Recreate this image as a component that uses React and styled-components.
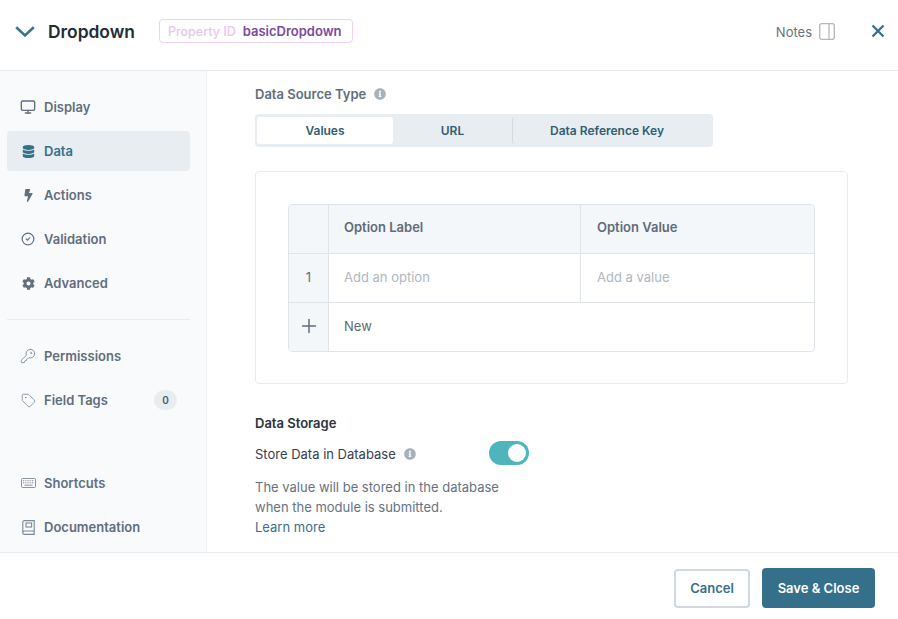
import React from 'react';
import styled, { createGlobalStyle } from 'styled-components';
import { CircleCheck, KeyRound, Monitor, Plus, Tag } from 'lucide-react';
import { FaBolt, FaCog, FaDatabase, FaInfoCircle } from 'react-icons/fa';

const GlobalStyle = createGlobalStyle`
  html, body {
    margin: 0;
    padding: 0;
    height: 100%;
    background: #fff;
    font-family: Inter, "Liberation Sans", sans-serif;
    overflow: hidden;
  }
  * {
    box-sizing: border-box;
  }
`;

const ChevronIcon = () => (
  <svg width="20" height="11" viewBox="0 0 20 11" fill="none" stroke="currentColor" strokeWidth="2.6">
    <path d="M1.2 1.2 L10 9.4 L18.8 1.2" />
  </svg>
);

const CloseGlyph = () => (
  <svg width="14" height="14" viewBox="0 0 14 14" fill="none" stroke="currentColor" strokeWidth="2.3">
    <path d="M1.5 1.5 L12.5 12.5 M12.5 1.5 L1.5 12.5" />
  </svg>
);

const PanelIcon = () => (
  <svg width="16" height="17" viewBox="0 0 16 17" fill="none" stroke="currentColor" strokeWidth="1.3">
    <rect x="0.7" y="0.7" width="14.6" height="15.6" rx="2" />
    <path d="M10 0.7 V16.3" />
  </svg>
);

const KeyboardIcon = () => (
  <svg width="15" height="10" viewBox="0 0 15 10" fill="none" stroke="currentColor" strokeWidth="0.9">
    <rect x="0.5" y="0.5" width="14" height="9" rx="1" />
    <path d="M2 2.7 H13 M2 4.8 H13" strokeDasharray="1 0.8" />
    <path d="M3.5 7.2 H11.5" />
  </svg>
);

const BookIcon = () => (
  <svg width="13" height="15" viewBox="0 0 13 15" fill="none" stroke="currentColor" strokeWidth="1.1">
    <path d="M2.5 0.6 H12.2 V14.4 H2.5 C1.4 14.4 0.8 13.7 0.8 12.7 V2.3 C0.8 1.3 1.4 0.6 2.5 0.6 Z" />
    <path d="M0.8 12.3 C0.8 11.4 1.4 11 2.5 11 H12.2" />
    <rect x="4" y="3" width="5.6" height="4" />
  </svg>
);

const mainItems = [
  { label: 'Display', icon: <Monitor size={16} /> },
  { label: 'Data', icon: <FaDatabase size={13} />, active: true },
  { label: 'Actions', icon: <FaBolt size={13} /> },
  { label: 'Validation', icon: <CircleCheck size={14} /> },
  { label: 'Advanced', icon: <FaCog size={13} /> },
];

const App = () => {
  return (
    <Modal>
      <GlobalStyle />
      <Header>
        <ChevronButton>
          <ChevronIcon />
        </ChevronButton>
        <Title>Dropdown</Title>
        <PropertyBadge>
          <span>Property ID</span>
          <strong>basicDropdown</strong>
        </PropertyBadge>
        <NotesLabel>Notes</NotesLabel>
        <NotesIcon>
          <PanelIcon />
        </NotesIcon>
        <CloseIcon>
          <CloseGlyph />
        </CloseIcon>
      </Header>

      <Body>
        <Sidebar>
          <NavGroup>
            {mainItems.map((item) => (
              <NavItem key={item.label} $active={item.active}>
                <NavIcon>{item.icon}</NavIcon>
                {item.label}
              </NavItem>
            ))}
          </NavGroup>
          <Divider />
          <NavGroup>
            <NavItem>
              <NavIcon $light>
                <KeyRound size={16} strokeWidth={1.3} />
              </NavIcon>
              Permissions
            </NavItem>
            <NavItem>
              <NavIcon $light>
                <Tag size={15} strokeWidth={1.3} />
              </NavIcon>
              Field Tags
              <Count>0</Count>
            </NavItem>
          </NavGroup>
          <BottomGroup>
            <NavItem>
              <NavIcon $light>
                <KeyboardIcon />
              </NavIcon>
              Shortcuts
            </NavItem>
            <NavItem>
              <NavIcon $light>
                <BookIcon />
              </NavIcon>
              Documentation
            </NavItem>
          </BottomGroup>
        </Sidebar>

        <Content>
          <FieldLabel>
            Data Source Type
            <InfoIcon>
              <FaInfoCircle size={12} />
            </InfoIcon>
          </FieldLabel>
          <Tabs>
            <Tab $active $width={136}>
              Values
            </Tab>
            <Tab $width={119}>URL</Tab>
            <Tab $width={189} $separated>
              Data Reference Key
            </Tab>
          </Tabs>

          <Card>
            <OptionsTable>
              <IndexCell $head />
              <HeadCell>Option Label</HeadCell>
              <HeadCell $last>Option Value</HeadCell>

              <IndexCell>1</IndexCell>
              <InputCell>Add an option</InputCell>
              <InputCell $last>Add a value</InputCell>

              <IndexCell $bottom>
                <Plus size={22} strokeWidth={1.6} />
              </IndexCell>
              <NewCell>New</NewCell>
            </OptionsTable>
          </Card>

          <SectionTitle>Data Storage</SectionTitle>
          <StorageRow>
            <StorageLabel>
              Store Data in Database
              <InfoIcon>
                <FaInfoCircle size={12} />
              </InfoIcon>
            </StorageLabel>
            <Toggle>
              <Knob />
            </Toggle>
          </StorageRow>
          <HelpText>
            The value will be stored in the database
            <br />
            when the module is submitted.
            <br />
            <LearnMore>Learn more</LearnMore>
          </HelpText>
        </Content>
      </Body>

      <Footer>
        <CancelButton>Cancel</CancelButton>
        <SaveButton>Save &amp; Close</SaveButton>
      </Footer>
    </Modal>
  );
};

const Modal = styled.div`
  width: 898px;
  height: 619px;
  display: flex;
  flex-direction: column;
  background: #fff;
  overflow: hidden;
`;

const Header = styled.header`
  height: 71px;
  flex: none;
  display: flex;
  align-items: center;
  padding: 0 13px 8px 15px;
  border-bottom: 1px solid #e6e9ed;
`;

const ChevronButton = styled.div`
  display: flex;
  color: #3f7186;
`;

const Title = styled.h1`
  margin: 0 0 0 13px;
  font-size: 17.4px;
  font-weight: 600;
  color: #222b36;
`;

const PropertyBadge = styled.div`
  height: 24px;
  margin-left: 24px;
  padding: 0 10px 0 8px;
  display: flex;
  align-items: center;
  gap: 7px;
  border: 1px solid #ecd3ef;
  border-radius: 4px;
  font-size: 13px;

  span {
    font-size: 12.5px;
    color: #e8c6ec;
    font-weight: 500;
  }
  strong {
    color: #7a4a9c;
    font-weight: 600;
  }
`;

const NotesLabel = styled.span`
  margin: 2px 0 0 auto;
  font-size: 13px;
  color: #66727f;
`;

const NotesIcon = styled.div`
  display: flex;
  margin-left: 7px;
  color: #b0b8c1;
`;

const CloseIcon = styled.div`
  display: flex;
  margin-left: 36px;
  color: #35708a;
`;

const Body = styled.div`
  flex: 1;
  min-height: 0;
  display: flex;
`;

const Sidebar = styled.nav`
  width: 207px;
  flex: none;
  display: flex;
  flex-direction: column;
  padding: 16px 16px 5px 7px;
  background: #f8fafc;
  border-right: 1px solid #eef0f3;
`;

const NavGroup = styled.div`
  display: flex;
  flex-direction: column;
  gap: 4px;
`;

const BottomGroup = styled(NavGroup)`
  margin-top: auto;
`;

const NavItem = styled.div`
  height: 40px;
  display: flex;
  align-items: center;
  padding: 0 13px 0 12px;
  border-radius: 4px;
  font-size: 13px;
  font-weight: 600;
  color: ${(props) => (props.$active ? '#35708a' : '#626e7c')};
  background: ${(props) => (props.$active ? '#e8edf1' : 'transparent')};
`;

const NavIcon = styled.span`
  width: 18px;
  margin-right: 7px;
  display: flex;
  justify-content: center;
  align-items: center;
  color: ${(props) => (props.$light ? '#7d8894' : 'inherit')};
`;

const Count = styled.span`
  width: 23px;
  height: 20px;
  margin-left: auto;
  display: flex;
  align-items: center;
  justify-content: center;
  border-radius: 10px;
  background: #e8edf1;
  font-size: 10px;
  color: #4f5b68;
`;

const Divider = styled.div`
  height: 1px;
  margin: 16px 0;
  background: #e8ebef;
`;

const Content = styled.main`
  flex: 1;
  min-width: 0;
  padding: 14px 50px 0 48px;
  overflow: hidden;
`;

const FieldLabel = styled.div`
  height: 18px;
  display: flex;
  align-items: center;
  font-size: 13px;
  font-weight: 600;
  color: #626e7c;
`;

const InfoIcon = styled.span`
  display: flex;
  margin-left: 8px;
  color: #a7b1bc;
`;

const Tabs = styled.div`
  width: 458px;
  height: 33px;
  margin-top: 11px;
  padding: 3px 3px 3px 2px;
  display: flex;
  border-radius: 4px;
  background: #e8edf1;
`;

const Tab = styled.div`
  width: ${(props) => props.$width}px;
  display: flex;
  align-items: center;
  justify-content: center;
  border-radius: 3px;
  font-size: 12px;
  font-weight: 600;
  color: #2f5e73;
  background: ${(props) => (props.$active ? '#fff' : 'transparent')};
  border-left: ${(props) => (props.$separated ? '1px solid #d3d9df' : 'none')};
`;

const Card = styled.section`
  height: 213px;
  margin-top: 24px;
  padding: 32px;
  border: 1px solid #e9ecef;
  border-radius: 4px;
`;

const OptionsTable = styled.div`
  width: 527px;
  display: grid;
  grid-template-columns: 40px 252px 1fr;
  grid-template-rows: 49px 49px 48px;
  border: 1px solid #dfe4e9;
  border-radius: 4px;
  overflow: hidden;
`;

const IndexCell = styled.div`
  display: flex;
  align-items: center;
  justify-content: center;
  padding-bottom: 2px;
  background: #f4f7fa;
  border-right: 1px solid #dfe4e9;
  border-bottom: ${(props) => (props.$bottom ? 'none' : '1px solid #dfe4e9')};
  font-size: 13px;
  color: #5f6b79;
`;

const HeadCell = styled.div`
  display: flex;
  align-items: center;
  padding: 0 0 4px ${(props) => (props.$last ? '16px' : '15px')};
  background: #f4f7fa;
  border-bottom: 1px solid #dfe4e9;
  border-right: ${(props) => (props.$last ? 'none' : '1px solid #dfe4e9')};
  font-size: 13px;
  font-weight: 600;
  color: #5f6b79;
`;

const InputCell = styled.div`
  display: flex;
  align-items: center;
  padding: 0 0 2px ${(props) => (props.$last ? '16px' : '15px')};
  border-bottom: 1px solid #dfe4e9;
  border-right: ${(props) => (props.$last ? 'none' : '1px solid #dfe4e9')};
  font-size: 13px;
  color: #afb7c0;
`;

const NewCell = styled.div`
  grid-column: 2 / 4;
  display: flex;
  align-items: center;
  padding: 0 0 2px 15px;
  font-size: 13px;
  color: #5f6b79;
`;

const SectionTitle = styled.h3`
  margin: 30px 0 0 0;
  font-size: 13px;
  line-height: 18px;
  font-weight: 600;
  color: #2a333e;
`;

const StorageRow = styled.div`
  width: 274px;
  height: 24px;
  margin-top: 9px;
  display: flex;
  align-items: center;
  justify-content: space-between;
`;

const StorageLabel = styled.div`
  display: flex;
  align-items: center;
  padding-top: 2px;
  font-size: 13px;
  color: #36404c;
`;

const Toggle = styled.div`
  width: 40px;
  height: 24px;
  padding: 3px;
  display: flex;
  justify-content: flex-end;
  border-radius: 12px;
  background: #4fb5bd;
`;

const Knob = styled.div`
  width: 18px;
  height: 18px;
  border-radius: 50%;
  background: #fff;
`;

const HelpText = styled.p`
  margin: 12px 0 0 0;
  font-size: 13px;
  line-height: 20px;
  color: #66727f;
`;

const LearnMore = styled.a`
  color: #35708a;
`;

const Footer = styled.footer`
  height: 67px;
  flex: none;
  display: flex;
  align-items: center;
  justify-content: flex-end;
  gap: 12px;
  padding: 4px 23px 0 0;
  border-top: 1px solid #e9ecef;
`;

const CancelButton = styled.button`
  width: 76px;
  height: 39px;
  border: 2px solid #cfd9df;
  border-radius: 4px;
  background: #fff;
  font-family: inherit;
  font-size: 13px;
  font-weight: 600;
  color: #35708a;
`;

const SaveButton = styled.button`
  width: 113px;
  height: 40px;
  border: none;
  border-radius: 4px;
  background: #35708a;
  font-family: inherit;
  font-size: 13px;
  font-weight: 600;
  color: #fff;
`;

export default App;
